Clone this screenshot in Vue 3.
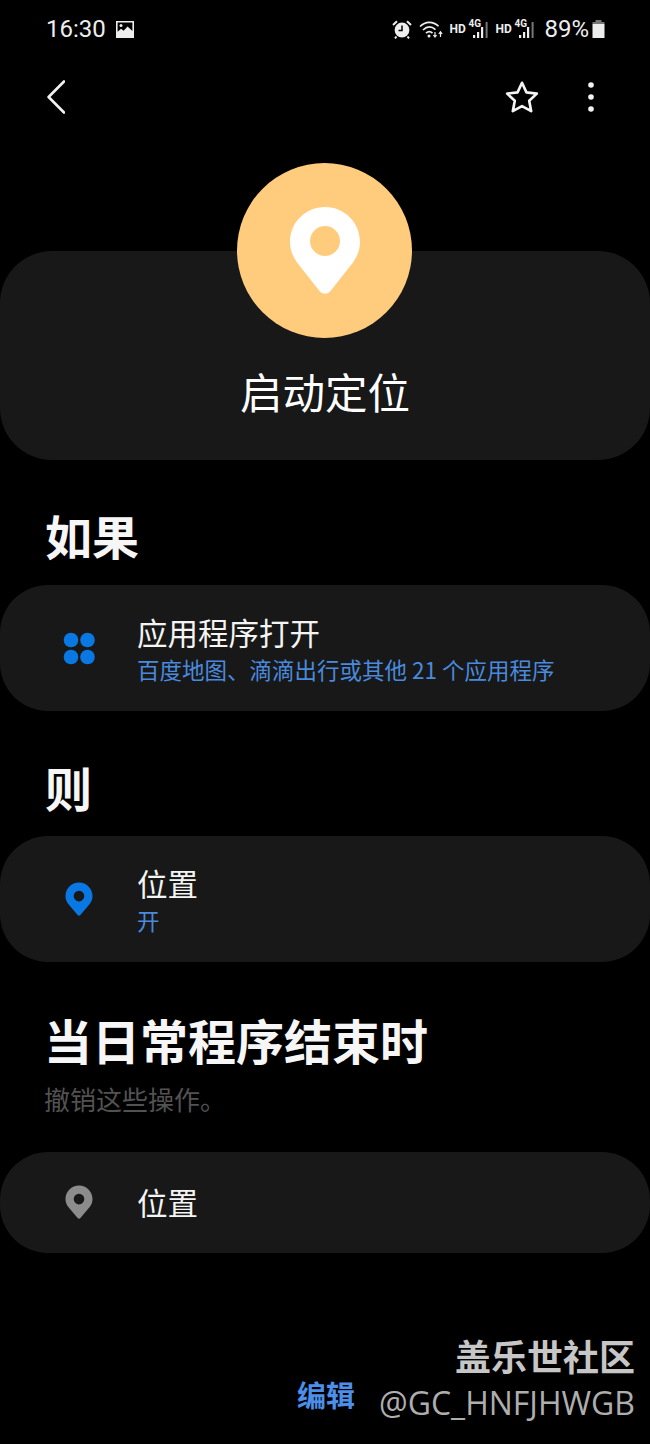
<template>
  <div class="page">
    <div class="status-bar">
      <div class="status-left">
        <span class="time">16:30</span>
        <svg class="ic-image" viewBox="0 0 18 17" width="18" height="17">
          <path fill="#eee" fill-rule="evenodd" d="M0 0h18v17H0zM1.600 1.600v9.200l3.400-3 2.600 2 4-4.300 4.800 4.600V1.600z" />
          <circle cx="5" cy="4.600" r="1.500" fill="#eee" />
        </svg>
      </div>
      <div class="status-right">
        <svg class="ic-alarm" viewBox="0 0 20 19" width="20" height="19">
          <circle cx="10" cy="10" r="7.400" fill="#eee" />
          <path d="M10 5.500V10.500H6.500" fill="none" stroke="#000" stroke-width="1.500" />
          <path d="M1 5 5 1.200M19 5 15 1.200M4.500 16.500 3 18.400M15.500 16.500 17 18.400" stroke="#eee" stroke-width="2" fill="none" />
        </svg>
        <svg class="ic-wifi" viewBox="0 0 24 18" width="24" height="18">
          <path d="M1 6.500C6.500 1 14 1 19.500 6.200M4 10C8 6.200 12.500 6.200 16.500 9.600M7 13.200C9 11.400 11.500 11.400 13.500 13" fill="none" stroke="#eee" stroke-width="1.700" />
          <circle cx="10" cy="16" r="1.500" fill="#eee" />
          <path d="M16 12v4.500M14.400 15l1.600 2 1.600-2M21.500 17v-5M19.800 14l1.700-2.200 1.700 2.200" fill="none" stroke="#eee" stroke-width="1.200" />
        </svg>
        <span class="hd">HD</span>
        <span class="net">
          <span class="net-label">4G</span>
          <svg viewBox="0 0 22 17" width="22" height="17">
            <path d="M5 14h2.200v3H5zM9 11h2.200v6H9zM13 6h2.200v11H13z" fill="#eee" />
            <path d="M17.600 1h2v16h-2z" fill="#777" />
          </svg>
        </span>
        <span class="hd hd-second">HD</span>
        <span class="net">
          <span class="net-label">4G</span>
          <svg viewBox="0 0 22 17" width="22" height="17">
            <path d="M5 14h2.200v3H5zM9 11h2.200v6H9zM13 6h2.200v11H13z" fill="#eee" />
            <path d="M17.600 1h2v16h-2z" fill="#777" />
          </svg>
        </span>
        <span class="battery-text">89%</span>
        <svg class="ic-battery" viewBox="0 0 13 18" width="13" height="18">
          <path d="M3.500 0h6v2h-6z" fill="#777" />
          <path d="M0.500 2h12v2h-12z" fill="#777" />
          <path d="M0.500 4h12v14h-12z" fill="#eee" />
        </svg>
      </div>
    </div>

    <div class="toolbar">
      <svg class="ic-back" viewBox="0 0 18 34" width="18" height="34">
        <path d="M17 1.500 1.600 17 17 32.500" fill="none" stroke="#f2f2f2" stroke-width="2.600" stroke-linecap="round" stroke-linejoin="round" />
      </svg>
      <div class="toolbar-actions">
        <svg viewBox="0 0 34 32" width="36" height="34">
          <path d="M17 2.600 21.200 11.600 31 12.800 23.800 19.600 25.700 29.400 17 24.600 8.300 29.400 10.200 19.600 3 12.800 12.800 11.600Z" fill="none" stroke="#f4f4f4" stroke-width="2.500" stroke-linejoin="round" />
        </svg>
        <svg class="ic-more" viewBox="0 0 6 30" width="6" height="30">
          <circle cx="3" cy="3" r="2.800" fill="#f4f4f4" />
          <circle cx="3" cy="15" r="2.800" fill="#f4f4f4" />
          <circle cx="3" cy="27" r="2.800" fill="#f4f4f4" />
        </svg>
      </div>
    </div>

    <div class="hero-icon">
      <svg viewBox="0 0 72 90" width="72" height="90">
        <path
          fill="#fff"
          fill-rule="evenodd"
          d="M36 1C16.500 1 1 16.500 1 36c0 8 2.800 14.500 7 20.500L30.500 85c3 3.600 8 3.600 11 0L64 56.500C68.200 50.500 71 44 71 36 71 16.500 55.500 1 36 1ZM36 20a15 15 0 1 1 0 30 15 15 0 0 1 0-30Z"
        />
      </svg>
    </div>
    <div class="card hero-card">
      <h1 class="hero-title">启动定位</h1>
    </div>

    <h2 class="section-title if-title">如果</h2>
    <div class="card row row-tall">
      <div class="row-icon">
        <svg viewBox="0 0 32 33" width="32" height="33">
          <circle cx="8" cy="8" r="7.300" fill="#0a78e2" />
          <circle cx="24.500" cy="8" r="7.300" fill="#0a78e2" />
          <circle cx="8" cy="25" r="7.300" fill="#0a78e2" />
          <circle cx="24.500" cy="25" r="7.300" fill="#0a78e2" />
        </svg>
      </div>
      <div class="row-text">
        <div class="row-title">应用程序打开</div>
        <div class="row-sub">百度地图、滴滴出行或其他 21 个应用程序</div>
      </div>
    </div>

    <h2 class="section-title then-title">则</h2>
    <div class="card row row-tall">
      <div class="row-icon">
        <svg viewBox="0 0 28 34" width="28" height="34">
          <path
            fill="#0a78e2"
            fill-rule="evenodd"
            d="M14 0.500C6.500 0.500 0.500 6.500 0.500 14c0 3 1 5.500 2.600 7.800L12.600 33c.8 1 2 1 2.800 0l9.500-11.200C26.500 19.500 27.500 17 27.500 14 27.500 6.500 21.500 0.500 14 0.500ZM14 8.800a5.300 5.300 0 1 1 0 10.600 5.300 5.300 0 0 1 0-10.600Z"
          />
        </svg>
      </div>
      <div class="row-text">
        <div class="row-title">位置</div>
        <div class="row-sub">开</div>
      </div>
    </div>

    <h2 class="section-title end-title">当日常程序结束时</h2>
    <p class="end-note">撤销这些操作。</p>
    <div class="card row row-short">
      <div class="row-icon">
        <svg viewBox="0 0 28 34" width="28" height="34">
          <path
            fill="#8c8c8c"
            fill-rule="evenodd"
            d="M14 0.500C6.500 0.500 0.500 6.500 0.500 14c0 3 1 5.500 2.600 7.800L12.600 33c.8 1 2 1 2.800 0l9.500-11.200C26.500 19.500 27.500 17 27.500 14 27.500 6.500 21.500 0.500 14 0.500ZM14 8.800a5.300 5.300 0 1 1 0 10.600 5.300 5.300 0 0 1 0-10.600Z"
          />
        </svg>
      </div>
      <div class="row-text">
        <div class="row-title">位置</div>
      </div>
    </div>

    <div class="edit-btn">编辑</div>
    <div class="watermark">
      <div class="wm-top">盖乐世社区</div>
      <div class="wm-user">@GC_HNFJHWGB</div>
    </div>
  </div>
</template>

<script setup>
</script>

<style>
html,
body {
  margin: 0;
  background: #000;
}
</style>

<style scoped>
.page {
  position: relative;
  width: 650px;
  height: 1444px;
  overflow: hidden;
  background: #000;
  color: #f4f4f4;
  font-family: "Noto Sans CJK SC", "Noto Sans", sans-serif;
}
.status-bar {
  display: flex;
  align-items: center;
  justify-content: space-between;
  height: 58px;
  padding: 0 45px 0 46px;
}
.status-left {
  display: flex;
  align-items: center;
  gap: 10px;
}
.time {
  font-family: Roboto, sans-serif;
  font-size: 24px;
  color: #eee;
}
.status-right {
  display: flex;
  align-items: center;
  color: #eee;
  font-family: Roboto, sans-serif;
}
.ic-alarm {
  margin-left: -1px;
}
.ic-wifi {
  margin-left: 7px;
}
.hd {
  margin-left: 6px;
  font-size: 12px;
  font-weight: 700;
  width: 16px;
}
.hd-second {
  margin-left: 5px;
}
.net {
  position: relative;
  display: block;
  width: 22px;
  height: 17px;
  margin-left: 3px;
}
.net svg {
  display: block;
}
.net-label {
  position: absolute;
  top: -3px;
  left: 0;
  font-size: 10px;
  font-weight: 700;
}
.battery-text {
  margin-left: 8px;
  font-size: 24px;
}
.ic-battery {
  margin-left: 3px;
}
.toolbar {
  display: flex;
  align-items: center;
  justify-content: space-between;
  height: 78px;
  padding: 0 56px 0 47px;
}
.toolbar-actions {
  display: flex;
  align-items: center;
  gap: 48px;
}
.hero-icon {
  position: relative;
  z-index: 1;
  display: flex;
  align-items: center;
  justify-content: center;
  width: 175px;
  height: 175px;
  margin: 27px 0 -87px 237px;
  border-radius: 50%;
  background: #ffcc7e;
}
.card {
  background: #181818;
}
.hero-card {
  display: flex;
  justify-content: center;
  height: 209px;
  border-radius: 52px;
}
.hero-title {
  margin: 110px 0 0;
  font-size: 42.500px;
  font-weight: 400;
  line-height: 60px;
  color: #fff;
}
.section-title {
  margin: 0 0 0 45px;
  font-size: 47px;
  font-weight: 700;
  line-height: 60px;
  color: #f6f6f6;
}
.if-title {
  margin-top: 45px;
  margin-bottom: 20px;
}
.then-title {
  margin-top: 46px;
  margin-bottom: 19px;
}
.end-title {
  margin-top: 47px;
  margin-bottom: 11px;
  margin-left: 44px;
  font-size: 48px;
}
.end-note {
  margin: 0 0 34px 44px;
  font-size: 26px;
  line-height: 38px;
  color: #525252;
}
.row {
  display: flex;
  align-items: center;
  border-radius: 48px;
}
.row-tall {
  height: 126px;
}
.row-tall .row-text {
  padding-top: 1px;
}
.row-short {
  height: 101px;
}
.row-short .row-text {
  margin-bottom: 2px;
}
.row-short .row-icon {
  margin-bottom: 2px;
}
.row-icon {
  display: flex;
  align-items: center;
  justify-content: center;
  width: 32px;
  margin-left: 63px;
  margin-right: 43px;
}
.row-icon svg {
  display: block;
}
.row-text {
  margin-left: -1px;
}
.row-title {
  font-size: 30.500px;
  line-height: 38px;
  color: #f4f4f4;
}
.row-sub {
  margin-top: 2px;
  font-size: 22.500px;
  line-height: 32px;
  color: #4a8ade;
}
.edit-btn {
  position: absolute;
  left: 297px;
  top: 1374px;
  font-size: 29px;
  font-weight: 700;
  line-height: 40px;
  color: #4d8fe8;
}
.watermark {
  position: absolute;
  right: 15px;
  top: 1331px;
  text-align: right;
}
.wm-top {
  font-size: 36px;
  font-weight: 700;
  line-height: 48px;
  color: #c6c6c6;
}
.wm-user {
  margin-top: 2px;
  font-family: "Open Sans", sans-serif;
  font-size: 32px;
  line-height: 44px;
  color: #aeaeae;
}
</style>
